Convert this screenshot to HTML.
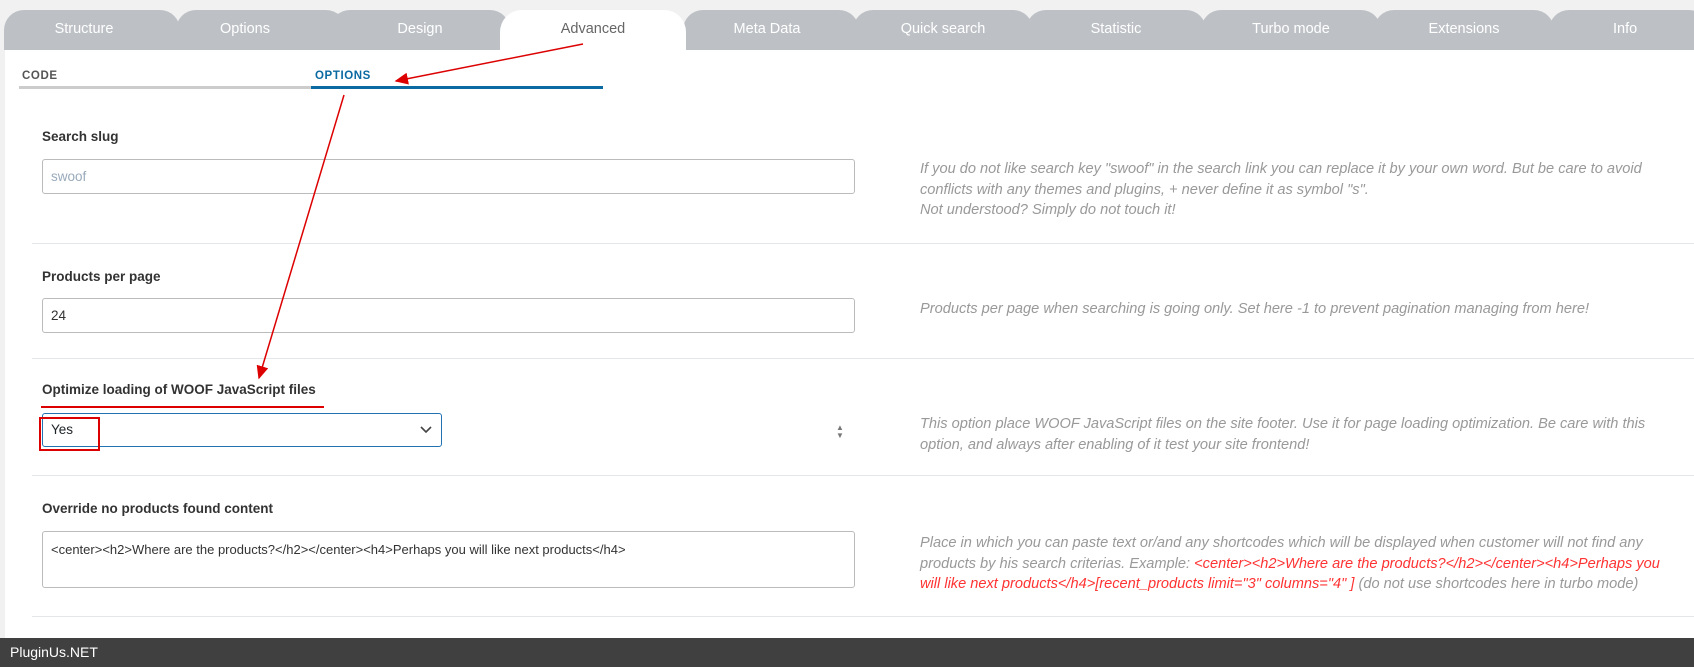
<!DOCTYPE html>
<html><head><meta charset="utf-8"><style>
*{box-sizing:border-box;margin:0;padding:0}
body{width:1694px;height:667px;overflow:hidden;background:#fff;font-family:"Liberation Sans",sans-serif;position:relative}
.top{position:absolute;left:0;top:0;width:1694px;height:50px;background:#f1f1f1}
.tab{position:absolute;top:10px;height:40px;width:180px;background:#bdc1c6;border-radius:20px 20px 0 0;color:#fff;font-size:14.5px;text-align:center;line-height:38px}
.tab.act{background:#fff;color:#666;border-radius:22px 22px 0 0}
.strip{position:absolute;left:0;top:50px;width:5px;height:590px;background:#f1f1f1}
.sub{position:absolute;top:70px;font-size:11.5px;font-weight:bold;letter-spacing:.6px}
.lbl{position:absolute;left:42px;font-size:13.5px;font-weight:bold;color:#333}
.inp{position:absolute;left:42px;width:813px;border:1px solid #bbb;border-radius:3px;background:#fff;font-size:13.5px;padding-left:8px;color:#333}
.help{position:absolute;left:920px;font-size:14.6px;font-style:italic;color:#999;line-height:20.5px;white-space:nowrap}
.hr{position:absolute;left:32px;right:0;height:1px;background:#e3e7ea}
.red{color:#f33}
.foot{position:absolute;left:0;top:638px;width:1694px;height:29px;background:#404040;color:#fff;font-size:14px;line-height:29px;padding-left:10px}
</style></head><body>
<div class="top"></div>
<div class="tab" style="left:4px;width:176px;padding-right:16px">Structure</div>
<div class="tab" style="left:176px;width:170px;padding-right:32px">Options</div>
<div class="tab" style="left:330px">Design</div>
<div class="tab" style="left:683px;width:176px;padding-right:8px">Meta Data</div>
<div class="tab" style="left:853px">Quick search</div>
<div class="tab" style="left:1026px">Statistic</div>
<div class="tab" style="left:1201px">Turbo mode</div>
<div class="tab" style="left:1374px">Extensions</div>
<div class="tab" style="left:1549px;width:160px;text-align:left;padding-left:64px">Info</div>
<div class="tab act" style="left:500px;width:186px">Advanced</div>
<div class="strip"></div>

<div class="sub" style="left:22px;color:#555">CODE</div>
<div class="sub" style="left:315px;color:#0b6aa2">OPTIONS</div>
<div style="position:absolute;left:19px;top:86px;width:292px;height:3px;background:#ccc"></div>
<div style="position:absolute;left:311px;top:86px;width:292px;height:3px;background:#0b6aa2"></div>

<div class="lbl" style="top:129px">Search slug</div>
<div class="inp" style="top:159px;height:35px;line-height:33px;color:#9ab">swoof</div>
<div class="help" style="top:159px">If you do not like search key "swoof" in the search link you can replace it by your own word. But be care to avoid<br>conflicts with any themes and plugins, + never define it as symbol "s".<br>Not understood? Simply do not touch it!</div>
<div class="hr" style="top:243px"></div>

<div class="lbl" style="top:269px">Products per page</div>
<div class="inp" style="top:298px;height:35px;line-height:33px">24</div>
<div class="help" style="top:299px">Products per page when searching is going only. Set here -1 to prevent pagination managing from here!</div>
<div class="hr" style="top:358px"></div>

<div class="lbl" style="top:382px">Optimize loading of WOOF JavaScript files</div>
<div style="position:absolute;left:41px;top:406px;width:283px;height:2px;background:#d00"></div>
<div class="inp" style="top:413px;width:400px;height:34px;line-height:32px;border-color:#2271b1;color:#1d2327">Yes<svg style="position:absolute;right:9px;top:12px" width="12" height="8" viewBox="0 0 12 8"><path d="M1 1l5 5 5-5" fill="none" stroke="#444" stroke-width="1.6"/></svg></div>
<div style="position:absolute;left:39px;top:417px;width:61px;height:34px;border:2px solid #d00"></div>
<div style="position:absolute;left:836px;top:424px;font-size:8px;color:#777;line-height:8px">▲<br>▼</div>
<div class="help" style="top:414px">This option place WOOF JavaScript files on the site footer. Use it for page loading optimization. Be care with this<br>option, and always after enabling of it test your site frontend!</div>
<div class="hr" style="top:475px"></div>

<div class="lbl" style="top:501px">Override no products found content</div>
<div class="inp" style="top:531px;height:57px;padding-top:10px;font-size:13px">&lt;center&gt;&lt;h2&gt;Where are the products?&lt;/h2&gt;&lt;/center&gt;&lt;h4&gt;Perhaps you will like next products&lt;/h4&gt;</div>
<div class="help" style="top:533px">Place in which you can paste text or/and any shortcodes which will be displayed when customer will not find any<br>products by his search criterias. Example: <span class="red">&lt;center&gt;&lt;h2&gt;Where are the products?&lt;/h2&gt;&lt;/center&gt;&lt;h4&gt;Perhaps you</span><br><span class="red">will like next products&lt;/h4&gt;[recent_products limit="3" columns="4" ]</span> (do not use shortcodes here in turbo mode)</div>
<div class="hr" style="top:616px"></div>

<svg style="position:absolute;left:0;top:0" width="1694" height="667">
<defs><marker id="a" markerWidth="10" markerHeight="10" refX="8" refY="5" orient="auto"><path d="M0 1L9 5L0 9z" fill="#d00"/></marker></defs>
<line x1="583" y1="44" x2="396" y2="81" stroke="#d00" stroke-width="1.5" marker-end="url(#a)"/>
<line x1="344" y1="95" x2="259" y2="378" stroke="#d00" stroke-width="1.5" marker-end="url(#a)"/>
</svg>
<div class="foot">PluginUs.NET</div>
</body></html>
